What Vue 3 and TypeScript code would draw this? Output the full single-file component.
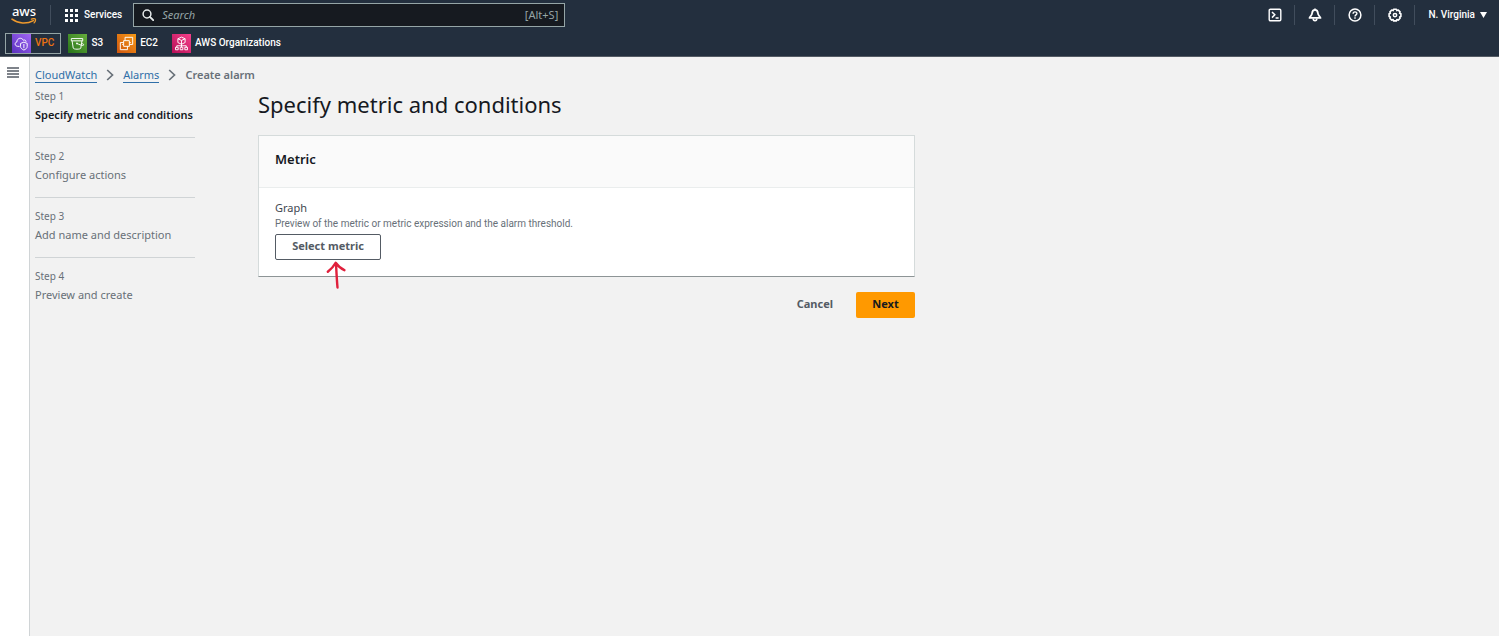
<script setup lang="ts">
interface Step {
  id: number
  title: string
}

const steps: Step[] = [
  { id: 1, title: 'Specify metric and conditions' },
  { id: 2, title: 'Configure actions' },
  { id: 3, title: 'Add name and description' },
  { id: 4, title: 'Preview and create' },
]
const activeStep = 1
</script>

<template>
  <div class="page">
    <header class="top">
      <div class="bar">
        <a class="logo" href="#" aria-label="AWS home">
          <span class="logo-text">aws</span>
          <svg class="smile" viewBox="0 0 26 7" aria-hidden="true">
            <path d="M1 1.2C7 5.8 16 6.2 22.4 2.6" fill="none" stroke="#f09a2c" stroke-width="1.6" stroke-linecap="round" />
            <path d="M20.4 1.2c1.6-.7 3.4-.7 4 0 .3 1-.3 2.700-1.300 3.700" fill="none" stroke="#f09a2c" stroke-width="1.300" stroke-linecap="round" />
          </svg>
        </a>
        <button class="services" type="button">
          <svg viewBox="0 0 13 13" width="13" height="13" aria-hidden="true">
            <path d="M0 0h3v3H0zM5 0h3v3H5zM10 0h3v3h-3zM0 5h3v3H0zM5 5h3v3H5zM10 5h3v3h-3zM0 10h3v3H0zM5 10h3v3H5zM10 10h3v3h-3z" fill="#fff" />
          </svg>
          <span>Services</span>
        </button>
        <label class="search">
          <svg viewBox="0 0 12 12" width="12" height="12" aria-hidden="true">
            <circle cx="5" cy="5" r="3.900" fill="none" stroke="#e6eaea" stroke-width="1.500" />
            <path d="M7.900 7.900l3.300 3.300" stroke="#e6eaea" stroke-width="1.900" stroke-linecap="round" />
          </svg>
          <input type="search" placeholder="Search" aria-label="Search" />
          <span class="hint">[Alt+S]</span>
        </label>
        <nav class="tools" aria-label="Account tools">
          <button type="button" aria-label="CloudShell">
            <svg viewBox="0 0 14 14" width="14" height="14" aria-hidden="true">
              <rect x="1.200" y="1.200" width="11.600" height="11.600" rx="1.200" fill="none" stroke="#fff" stroke-width="1.400" />
              <path d="M4 4l2.800 2.800L4 9.600M7.600 10h3" fill="none" stroke="#fff" stroke-width="1.500" />
            </svg>
          </button>
          <button type="button" aria-label="Notifications">
            <svg viewBox="0 0 14 14" width="14" height="14" aria-hidden="true">
              <path d="M7 1.800C4.800 1.800 4.200 3.300 4.100 5.200 4 7 2.800 7.700 1.500 9.900h11C11.200 7.700 10 7 9.900 5.200 9.800 3.300 9.200 1.800 7 1.800z" fill="none" stroke="#fff" stroke-width="1.800" stroke-linejoin="round" />
              <path d="M7 .4v1.400M5.200 10.500a1.800 2.200 0 0 0 3.600 0" fill="none" stroke="#fff" stroke-width="1.600" />
            </svg>
          </button>
          <button type="button" aria-label="Help">
            <svg viewBox="0 0 14 14" width="14" height="14" aria-hidden="true">
              <circle cx="7" cy="7" r="5.900" fill="none" stroke="#fff" stroke-width="1.500" />
              <path d="M5.100 5.700c0-2.500 3.800-2.400 3.800-.2 0 1.400-1.900 1.300-1.900 2.900M7 9.300v1.400" fill="none" stroke="#fff" stroke-width="1.400" />
            </svg>
          </button>
          <button type="button" aria-label="Settings">
            <svg viewBox="0 0 14 14" width="14" height="14" aria-hidden="true">
              <path d="M5.600 1.300h2.800l.5 1.300 1.400-.5 1.800 1.800-.5 1.300 1.300.6v2.600l-1.300.6.5 1.300-1.800 1.800-1.400-.5-.5 1.300H5.600l-.5-1.300-1.400.5-1.800-1.800.5-1.300-1.300-.6V5.800l1.300-.6-.5-1.300 1.800-1.800 1.400.5z" fill="none" stroke="#fff" stroke-width="1.600" stroke-linejoin="round" />
              <circle cx="7" cy="7.100" r="1.700" fill="none" stroke="#fff" stroke-width="1.500" />
            </svg>
          </button>
          <button class="region" type="button">
            <span>N. Virginia</span>
            <svg viewBox="0 0 7 6" width="7" height="6" aria-hidden="true"><path d="M0 0h7L3.500 6z" fill="#fff" /></svg>
          </button>
        </nav>
      </div>
      <nav class="favorites" aria-label="Favorites">
        <a class="fav current" href="#">
          <svg viewBox="0 0 20 20" aria-hidden="true">
            <defs><linearGradient id="g-vpc" x1="0" y1="1" x2="1" y2="0"><stop offset="0" stop-color="#5a32bd" /><stop offset="1" stop-color="#a165f5" /></linearGradient></defs>
            <rect width="20" height="20" fill="url(#g-vpc)" />
            <path d="M8 13H6c-3.300-.3-3.500-4-.8-4.700C5 4.300 10.300 3 12 6.600c1.500-.8 2.800.2 2.800 1.600M12.500 8.600l3.500 1.300v3.300c0 1.800-1.500 2.800-3.500 3.700-2-.9-3.500-1.900-3.500-3.700V9.900zM12.500 10.500v4.500" fill="none" stroke="#fff" stroke-width="1" />
          </svg>
          <span>VPC</span>
        </a>
        <a class="fav" href="#">
          <svg viewBox="0 0 20 20" aria-hidden="true">
            <defs><linearGradient id="g-s3" x1="0" y1="1" x2="1" y2="0"><stop offset="0" stop-color="#277419" /><stop offset="1" stop-color="#66ad3c" /></linearGradient></defs>
            <rect width="20" height="20" fill="url(#g-s3)" />
            <path d="M3.500 4.800h12v2.400h-12zM4.300 7.200l1.200 7.600c.3 1.600 7.700 1.600 8 0l1.200-7.600M9.500 10c3 1.500 7 2.800 7 1.400 0-.8-1-1.200-1.900-1.600" fill="none" stroke="#fff" stroke-width="1" stroke-linejoin="round" />
            <circle cx="9.400" cy="9.900" r=".9" fill="#fff" />
          </svg>
          <span>S3</span>
        </a>
        <a class="fav" href="#">
          <svg viewBox="0 0 20 20" aria-hidden="true">
            <defs><linearGradient id="g-ec2" x1="0" y1="1" x2="1" y2="0"><stop offset="0" stop-color="#cf560f" /><stop offset="1" stop-color="#f79a16" /></linearGradient></defs>
            <rect width="20" height="20" fill="url(#g-ec2)" />
            <path d="M7 7h6v6H7zM8.500 7V3.500h8V11H13M7 9H3.500v7.500H11V13M13 9h1.500M5.500 11H7" fill="none" stroke="#fff" stroke-width="1" />
          </svg>
          <span>EC2</span>
        </a>
        <a class="fav" href="#">
          <svg viewBox="0 0 20 20" aria-hidden="true">
            <defs><linearGradient id="g-org" x1="0" y1="1" x2="1" y2="0"><stop offset="0" stop-color="#b60f56" /><stop offset="1" stop-color="#f6408b" /></linearGradient></defs>
            <rect width="20" height="20" fill="url(#g-org)" />
            <path d="M10 3.300l3.800 1.700v4L10 10.800 6.200 9V5zM6.200 5L10 6.800 13.800 5M10 6.800v7M5 14v-1.600h10V14M3.700 14h2.800v2.600H3.700zM8.600 14h2.800v2.600H8.600zM13.500 14h2.800v2.600h-2.800z" fill="none" stroke="#fff" stroke-width="1" />
          </svg>
          <span>AWS Organizations</span>
        </a>
      </nav>
    </header>

    <div class="body">
      <aside class="rail">
        <button type="button" aria-label="Open navigation">
          <svg viewBox="0 0 12 11" width="12" height="11" aria-hidden="true">
            <path d="M0 1h12M0 4h12M0 7h12M0 10h12" stroke="#545b64" stroke-width="1.500" />
          </svg>
        </button>
      </aside>
      <main class="main">
        <nav class="crumbs" aria-label="Breadcrumb">
          <a href="#">CloudWatch</a>
          <svg viewBox="0 0 8 12" width="8" height="12" aria-hidden="true"><path d="M1.200 1l5.300 5-5.300 5" fill="none" stroke="#687078" stroke-width="1.700" /></svg>
          <a href="#">Alarms</a>
          <svg viewBox="0 0 8 12" width="8" height="12" aria-hidden="true"><path d="M1.200 1l5.300 5-5.300 5" fill="none" stroke="#687078" stroke-width="1.700" /></svg>
          <span aria-current="page">Create alarm</span>
        </nav>
        <div class="wizard">
          <ol class="steps">
            <li v-for="step in steps" :key="step.id" :class="{ active: step.id === activeStep }">
              <small>Step {{ step.id }}</small>
              <span>{{ step.title }}</span>
            </li>
          </ol>
          <section class="content">
            <h1>Specify metric and conditions</h1>
            <div class="card">
              <h2>Metric</h2>
              <div class="card-body">
                <h3>Graph</h3>
                <p>Preview of the metric or metric expression and the alarm threshold.</p>
                <div class="select-wrap">
                  <button class="select" type="button">Select metric</button>
                  <svg class="arrow" viewBox="0 0 20 28" aria-hidden="true">
                    <path d="M11.500 26.500C10.800 19 10.400 10 10 2.300M1.800 10.800C5.200 8 8 5 9.700 1.800 12 5 14.500 7.600 18.400 9.200" fill="none" stroke="#e0203c" stroke-width="2.400" stroke-linecap="round" stroke-linejoin="round" />
                  </svg>
                </div>
              </div>
            </div>
            <div class="actions">
              <button class="cancel" type="button">Cancel</button>
              <button class="next" type="button">Next</button>
            </div>
          </section>
        </div>
      </main>
    </div>
  </div>
</template>

<style>
body {
  margin: 0;
  background: #f2f2f2;
}
</style>

<style scoped>
* {
  box-sizing: border-box;
}
.page {
  display: flex;
  flex-direction: column;
  min-height: 100vh;
  font-family: "Noto Sans", "Open Sans", sans-serif;
  font-size: 11px;
  line-height: 16px;
  color: #16191f;
}
button,
input {
  font: inherit;
  color: inherit;
}
button {
  display: flex;
  align-items: center;
  justify-content: center;
  padding: 0;
  border: 0;
  background: none;
  cursor: pointer;
}
a {
  text-decoration: none;
}
svg {
  display: block;
  flex: none;
}
.top {
  background: #232f3e;
  color: #fff;
  border-bottom: 1px solid #545b64;
}
.services,
.region,
.fav {
  font-family: Roboto, "Noto Sans", sans-serif;
  font-size: 10px;
  font-weight: 500;
}
.bar {
  display: flex;
  align-items: center;
  height: 30px;
}
.logo {
  display: flex;
  flex-direction: column;
  align-items: center;
  width: 51px;
  height: 20px;
  padding-right: 2px;
  border-right: 1px solid #414d5c;
  color: #fff;
}
.logo-text {
  font-size: 13px;
  line-height: 13px;
  font-weight: 500;
}
.smile {
  width: 26px;
  height: 7px;
}
.services {
  gap: 6px;
  padding: 0 11px 0 14px;
}
.search {
  display: flex;
  align-items: center;
  gap: 8px;
  flex: 0 1 432px;
  height: 24px;
  padding: 0 6px 0 8px;
  border: 1px solid #95a5a6;
  background: #161a20;
}
.search input {
  flex: 1;
  min-width: 0;
  padding: 0;
  border: 0;
  outline: 0;
  background: none;
}
.search input::placeholder {
  color: #95a5a6;
  opacity: 1;
  font-style: italic;
}
.hint {
  color: #95a5a6;
}
.tools {
  display: flex;
  align-items: center;
  margin-left: auto;
}
.tools button {
  width: 40px;
  height: 20px;
  border-right: 1px solid #414d5c;
}
.tools .region {
  width: auto;
  gap: 5px;
  padding: 0 12px 0 13px;
  border: 0;
}
.favorites {
  display: flex;
  align-items: center;
  gap: 7px;
  height: 26px;
  padding-left: 5px;
}
.fav {
  display: flex;
  align-items: center;
  gap: 4px;
  height: 21px;
  padding-right: 7px;
  color: #fff;
}
.fav svg {
  width: 19px;
  height: 19px;
}
.current {
  padding: 0 6px;
  border: 1px solid #95a5a6;
  color: #ec7211;
}
.body {
  display: flex;
  flex: 1;
}
.rail {
  width: 30px;
  padding: 10px 0 0 7px;
  background: #fff;
  border-right: 1px solid #d0d4d6;
}
.main {
  flex: 1;
  padding: 10px 5px;
}
.crumbs {
  display: flex;
  align-items: center;
  gap: 9px;
  height: 16px;
  color: #687078;
  font-weight: 600;
}
.crumbs a {
  color: #2f6fa8;
  font-weight: 400;
  line-height: 14px;
  border-bottom: 1px solid #2f6fa8;
}
.wizard {
  display: flex;
  gap: 63px;
}
.steps {
  width: 160px;
  margin: 0;
  padding: 4px 0 0;
  list-style: none;
  color: #687078;
}
.steps li {
  height: 60px;
}
.steps li:not(:last-child)::after {
  content: "";
  display: block;
  margin-top: 12px;
  border-top: 1px solid #d0d4d6;
}
.steps small,
.steps span {
  display: block;
  white-space: nowrap;
}
.steps small {
  font-size: 10px;
  line-height: 18px;
}
.steps span {
  line-height: 20px;
}
.active span {
  color: #16191f;
  font-weight: 600;
}
.content {
  flex: 0 1 657px;
  padding-top: 6px;
}
h1,
h2,
h3,
p {
  margin: 0;
}
h1 {
  font-size: 22px;
  line-height: 30px;
  font-weight: 400;
}
.card {
  margin-top: 16px;
  background: #fff;
  border: 1px solid #d5dbdb;
  border-bottom-color: #8d9496;
}
h2 {
  padding: 13px 16px 18px;
  border-bottom: 1px solid #eaeded;
  background: #fafafa;
  font-size: 13px;
  line-height: 20px;
  font-weight: 600;
}
.card-body {
  padding: 12px 16px 16px;
}
h3 {
  font-size: 11px;
  line-height: 16px;
  font-weight: 400;
  color: #414750;
}
p {
  font-family: Roboto, "Noto Sans", sans-serif;
  font-size: 10px;
  line-height: 16px;
  color: #687078;
}
.select-wrap {
  position: relative;
  width: 106px;
  margin-top: 2px;
}
.select {
  width: 100%;
  height: 26px;
  padding-bottom: 2px;
  border: 1px solid #545b64;
  border-radius: 2px;
  color: #545b64;
  font-weight: 700;
}
.arrow {
  position: absolute;
  top: 27px;
  left: 51px;
  width: 20px;
  height: 28px;
}
.actions {
  display: flex;
  justify-content: flex-end;
  gap: 6px;
  margin-top: 15px;
  font-weight: 700;
}
.cancel {
  padding: 0 17px 2px;
  color: #545b64;
}
.next {
  width: 59px;
  height: 26px;
  padding-bottom: 2px;
  border-radius: 2px;
  background: #ff9900;
}
</style>
